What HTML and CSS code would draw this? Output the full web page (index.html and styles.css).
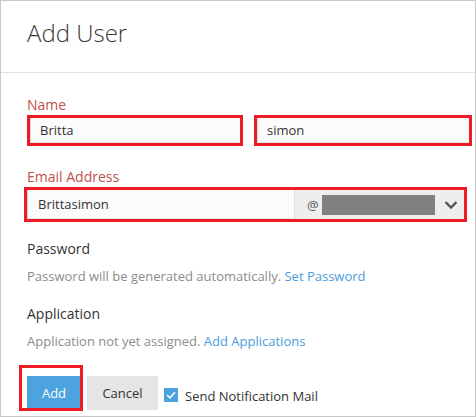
FILE: index.html
```html
<!DOCTYPE html>
<html>
<head>
<meta charset="utf-8">
<link rel="stylesheet" href="styles.css">
</head>
<body>
<div class="panel">
  <div class="header"><h1 class="title">Add User</h1></div>
  <div class="content">
    <div class="label label-err">Name</div>
    <div class="name-row">
      <div class="mark field-first"><div class="input">Britta</div></div>
      <div class="mark field-last"><div class="input">simon</div></div>
    </div>
    <div class="label label-err label-email">Email Address</div>
    <div class="mark field-email">
      <div class="input email-input">Brittasimon</div>
      <div class="addon">
        <span class="at">@</span>
        <span class="domain"></span>
        <svg class="chev" width="14" height="10" viewBox="0 0 14 10"><polyline points="1.5,2 7,7.5 12.5,2" fill="none" stroke="#555" stroke-width="2.4"/></svg>
      </div>
    </div>
    <div class="label label-pw">Password</div>
    <div class="help">Password will be generated automatically. <span class="link">Set Password</span></div>
    <div class="label label-app">Application</div>
    <div class="help">Application not yet assigned. <span class="link">Add Applications</span></div>
    <div class="actions">
      <button class="btn btn-add">Add</button>
      <button class="btn btn-cancel">Cancel</button>
      <span class="check"><svg width="10" height="8" viewBox="0 0 10 8"><polyline points="1,4 4,6.8 9,1.2" fill="none" stroke="#fff" stroke-width="1.6"/></svg></span>
      <span class="check-text">Send Notification Mail</span>
      <div class="add-mark"></div>
    </div>
  </div>
</div>
</body>
</html>
```

FILE: styles.css
```css
* { box-sizing: border-box; }
html, body { margin: 0; padding: 0; background: #fff; }
body { font-family: "Open Sans", "Liberation Sans", sans-serif; color: #333; }

.panel {
  width: 476px;
  height: 417px;
  border: 1px solid #c8c8c8;
  overflow: hidden;
}

.header {
  height: 72px;
  border-bottom: 1px solid #e2e2e2;
  padding: 16px 26px 0;
}
.title {
  margin: 0;
  font-size: 24px;
  line-height: 32px;
  font-weight: 300;
  color: #3a3a3a;
}

.content {
  padding: 22px 0 0 26px;
}

.label {
  font-size: 14px;
  line-height: 20px;
  color: #333;
}
.label-err { color: #c0504d; }
.label-email { margin-top: 21px; }
.label-pw { margin-top: 17px; }
.label-app { margin-top: 19px; }

.help {
  margin-top: 8px;
  font-size: 13px;
  line-height: 18px;
  color: #8c8c8c;
}
.link { color: #4a9ee0; }

.mark { border: 3px solid #ed1c24; }

.name-row {
  display: flex;
  gap: 11px;
}
.field-first { width: 216px; height: 31px; }
.field-last { width: 218px; height: 31px; }

.input {
  height: 100%;
  background: #fbfbfb;
  border-left: 1px solid #d6d6d6;
  border-bottom: 1px solid #e4e4e4;
  font-size: 13px;
  line-height: 23px;
  padding: 1px 0 0 9px;
  color: #333;
}

.field-email {
  margin-left: -3px;
  width: 443px;
  height: 35px;
  display: flex;
}
.email-input {
  width: 268px;
  line-height: 28px;
  padding: 0 0 0 10px;
  border-right: 1px solid #e0e0e0;
}
.addon {
  flex: 1;
  background: #eeeeee;
  display: flex;
  align-items: center;
  padding-left: 12px;
  font-size: 13px;
  color: #555;
}
.at { width: 16px; line-height: 20px; }
.domain {
  width: 113px;
  height: 20px;
  background: #808080;
  margin-left: -1px;
}
.chev { margin-left: 9px; margin-top: 1px; }

.actions {
  position: relative;
  margin-top: 26px;
  display: flex;
  align-items: center;
}
.btn {
  height: 34px;
  border: 0;
  font-family: inherit;
  font-size: 13px;
  line-height: 34px;
  padding: 0;
}
.btn-add {
  width: 54px;
  background: #4da3e0;
  color: #fff;
}
.btn-cancel {
  width: 71px;
  margin-left: 6px;
  background: #e5e5e5;
  color: #333;
}
.check {
  width: 14px;
  height: 14px;
  margin-left: 6px;
  margin-top: 4px;
  background: #4aa3df;
  display: flex;
  align-items: center;
  justify-content: center;
}
.check-text {
  margin-left: 7px;
  margin-top: 6px;
  font-size: 13px;
  line-height: 20px;
  color: #333;
}
.add-mark {
  position: absolute;
  left: -8px;
  top: -11px;
  width: 64px;
  height: 46px;
  border: 3px solid #ed1c24;
}
```
